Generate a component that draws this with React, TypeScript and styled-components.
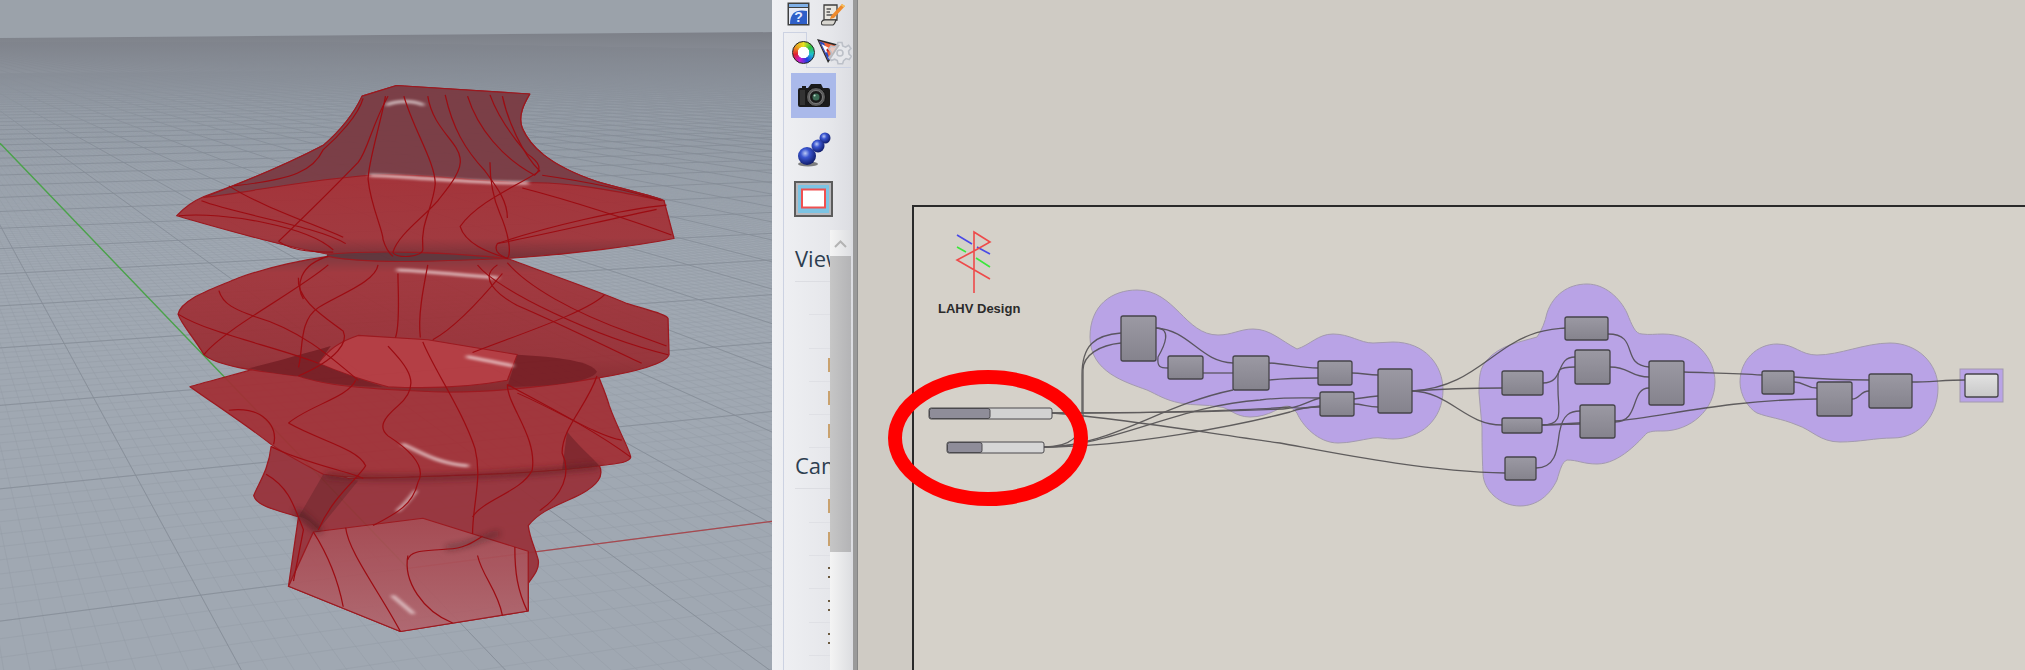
import React, { useMemo } from "react";
import styled, { createGlobalStyle } from "styled-components";

const Global = createGlobalStyle`
  html, body { margin: 0; padding: 0; background: #cfcbc4; overflow: hidden; }
  body { font-family: "Open Sans", "Liberation Sans", sans-serif; }
`;

const Page = styled.div`
  display: flex;
  width: 2025px;
  height: 670px;
  overflow: hidden;
`;

/* ---------- 3d viewport ---------- */
const Viewport = styled.svg`
  flex: none;
  width: 772px;
  height: 670px;
  display: block;
  filter: blur(0.5px);
`;

// perspective grid, two vanishing points on the horizon
const O = [820, 1330];
const VP1 = [9080, 85];
const VP2 = [-206, 85];
const A = 0.0048;
const B = 0.026;
const project = (u: number, v: number) => {
  const w = A * u + B * v + 1;
  const x = (A * u * VP1[0] + B * v * VP2[0] + O[0]) / w;
  const y = (A * u * VP1[1] + B * v * VP2[1] + O[1]) / w;
  return `${x.toFixed(1)} ${y.toFixed(1)}`;
};

const buildGrid = (step: number) => {
  let d = "";
  for (let u = -170; u <= 1500; u += step) {
    const v0 = (0.12 - 1 - A * u) / B;
    d += `M${project(u, v0)}L${project(u, 3000)}`;
  }
  for (let v = -30; v <= 500; v += step) {
    const u0 = (0.12 - 1 - B * v) / A;
    d += `M${project(u0, v)}L${project(6000, v)}`;
  }
  return d;
};

const neck =
  "M728 225 L797 200 L1065 220 C1055 240 1040 270 1050 300 C1065 340 1100 385 1200 425 C1260 445 1320 460 1335 470 L1355 558 C1280 575 1150 595 1020 605 C900 590 760 585 660 595 C560 575 430 530 355 505 C375 480 400 465 410 460 C470 435 560 395 650 340 C680 310 710 270 728 225 Z";
const neckShade =
  "M728 225 L797 200 L1065 220 C1055 240 1040 270 1050 300 C1065 340 1100 385 1200 425 C1260 445 1320 460 1335 470 C1250 450 1150 425 1060 428 C950 425 850 405 745 410 C620 420 500 450 410 462 C470 435 560 395 650 340 C680 310 710 270 728 225 Z";
const tier2 =
  "M358 735 C365 700 420 680 480 650 C540 625 600 610 660 600 C740 620 900 610 1020 605 C1100 640 1200 680 1260 710 C1300 725 1340 735 1343 745 L1345 830 C1340 850 1280 870 1200 885 C1100 905 950 925 840 915 C750 910 660 905 600 880 C530 870 440 860 410 830 C390 790 365 760 358 735 Z";
const tier3 =
  "M382 905 C440 885 600 840 720 785 L860 795 L1040 830 C1120 835 1190 845 1200 870 C1205 890 1215 910 1225 950 C1240 1000 1265 1050 1268 1070 C1265 1085 1230 1085 1205 1090 C1100 1105 1000 1110 850 1115 C770 1120 700 1120 650 1110 C600 1080 570 1060 545 1040 C490 990 430 945 382 905 Z";
const lower =
  "M545 1045 C540 1100 520 1130 510 1160 C515 1185 560 1195 600 1210 L590 1290 L580 1372 L805 1478 L1062 1430 L1062 1365 C1075 1345 1085 1330 1082 1310 C1075 1280 1065 1260 1062 1230 C1090 1190 1130 1180 1170 1155 C1200 1135 1215 1115 1205 1090 C1100 1105 900 1115 700 1120 Z";
const block = "M630 1245 L850 1213 L1062 1290 L1062 1430 L805 1478 L580 1372 Z";

const isoCurves = [
  "M775 225 C765 290 740 380 740 420 C745 480 770 540 770 560 C775 580 780 590 790 600",
  "M812 225 C830 300 875 380 875 430 C870 490 845 520 850 580 C855 605 790 605 790 590 C800 550 850 510 880 470 C900 440 930 400 925 370 C920 330 870 300 860 225",
  "M895 222 C910 300 935 350 975 400 C1000 440 1020 470 1020 510",
  "M940 225 C960 300 1010 370 1075 410 C1090 395 1085 380 1060 360 C1030 320 1000 270 985 222",
  "M1010 225 C1020 280 1050 360 1085 400 C1050 430 960 470 925 530 C935 570 980 590 1020 605 C1030 590 1020 540 1005 500 C990 460 985 420 985 380",
  "M360 505 C450 495 620 530 670 585",
  "M405 470 C470 500 640 530 695 570",
  "M460 435 C520 480 620 520 690 555",
  "M560 565 C600 520 670 440 720 380 C740 350 745 300 780 225",
  "M730 230 C720 270 680 320 650 350 C630 400 590 420 470 435",
  "M560 565 C590 590 640 590 670 590",
  "M1340 480 C1250 490 1100 530 1000 570 C990 590 1010 600 1020 605",
  "M1350 550 C1280 520 1150 470 1050 440",
  "M1320 490 C1200 520 1050 560 1000 570",
  "M1330 470 C1250 440 1150 420 1090 410",
  "M600 650 C595 700 650 740 690 775 C700 800 680 840 600 880",
  "M660 600 C600 620 595 670 610 700",
  "M760 620 C755 660 680 690 640 720 C600 750 610 820 600 860",
  "M800 640 C800 680 805 760 795 790",
  "M860 620 C850 680 840 740 845 790",
  "M440 680 C450 720 490 730 510 740 C600 770 660 830 720 890",
  "M358 735 C420 780 550 810 640 850",
  "M660 620 C600 680 450 770 410 830",
  "M1215 690 C1180 730 1050 780 950 825",
  "M960 620 C1000 680 1200 790 1343 830",
  "M1020 615 C1060 670 1150 730 1270 780 L1340 810",
  "M1000 620 C960 650 1000 690 1040 715 C1150 770 1250 830 1290 850",
  "M1010 640 C960 710 910 770 870 795",
  "M460 960 C530 950 560 1000 550 1040",
  "M580 990 C620 950 700 930 715 890",
  "M580 990 C640 1030 720 1050 735 1090 C720 1120 670 1160 640 1240",
  "M850 800 C870 860 930 960 955 1050 C970 1120 950 1180 950 1250",
  "M780 810 C820 860 850 900 800 950 C770 980 760 1000 780 1020 C820 1050 860 1090 840 1130 C830 1180 800 1200 750 1230",
  "M1020 900 C1020 950 1080 1020 1070 1100 C1050 1150 970 1170 950 1210",
  "M1200 880 C1180 950 1130 1000 1130 1060 C1150 1110 1130 1160 1085 1195",
  "M1020 900 C1100 950 1200 1010 1268 1070",
  "M1040 920 C1120 960 1200 1020 1250 1030",
  "M545 1045 C600 1080 720 1110 730 1120",
  "M535 1110 C580 1140 590 1180 610 1240 L590 1360",
  "M630 1245 C660 1300 680 1360 690 1420",
  "M695 1235 C700 1290 760 1380 805 1478",
  "M820 1300 C810 1360 850 1430 910 1458",
  "M960 1300 C970 1350 1000 1380 1010 1440",
  "M1035 1280 C1035 1340 1040 1380 1060 1430",
  "M820 1310 C825 1285 860 1290 900 1285 C930 1285 950 1270 970 1255",
];

const highlights = [
  "M778 245 C800 235 830 235 850 245",
  "M745 410 C850 415 960 430 1060 428",
  "M800 632 C860 635 940 645 1000 650",
  "M940 835 C970 842 1000 848 1030 856",
  "M810 1040 C850 1060 880 1085 940 1090",
  "M800 1195 C815 1180 825 1165 835 1150",
  "M790 1395 C805 1410 820 1425 830 1435",
];

const Scene = () => {
  const minor = useMemo(() => buildGrid(1), []);
  const major = useMemo(() => buildGrid(10), []);
  return (
    <Viewport viewBox="0 0 1552 1568" preserveAspectRatio="none">
      <defs>
        <linearGradient id="haze" x1="0" y1="0" x2="0" y2="1">
          <stop offset="0" stopColor="#7d8088" />
          <stop offset="0.35" stopColor="#878c95" stopOpacity="0.75" />
          <stop offset="1" stopColor="#a0a8b2" stopOpacity="0" />
        </linearGradient>
        <linearGradient id="flare" x1="0" y1="400" x2="0" y2="610" gradientUnits="userSpaceOnUse">
          <stop offset="0" stopColor="#a52e34" />
          <stop offset="0.75" stopColor="#a2343a" />
          <stop offset="1" stopColor="#6f2a30" />
        </linearGradient>
        <linearGradient id="tierTwo" x1="0" y1="600" x2="0" y2="920" gradientUnits="userSpaceOnUse">
          <stop offset="0" stopColor="#80343a" />
          <stop offset="0.12" stopColor="#a3343a" />
          <stop offset="0.75" stopColor="#983036" />
          <stop offset="1" stopColor="#842428" />
        </linearGradient>
        <linearGradient id="blockFill" x1="0" y1="1213" x2="0" y2="1478" gradientUnits="userSpaceOnUse">
          <stop offset="0" stopColor="#a6464e" />
          <stop offset="1" stopColor="#b0666e" />
        </linearGradient>
        <clipPath id="groundClip">
          <path d="M0 89 L1552 75 L1552 1568 L0 1568 Z" />
        </clipPath>
        <filter id="soft" x="-20%" y="-200%" width="140%" height="500%">
          <feGaussianBlur stdDeviation="4" />
        </filter>
        <filter id="shade" x="-10%" y="-50%" width="120%" height="200%">
          <feGaussianBlur stdDeviation="7" />
        </filter>
      </defs>

      <rect width="1552" height="1568" fill="#9ba2aa" />
      <path d="M0 89 L1552 75 L1552 1568 L0 1568 Z" fill="#a0a8b2" />
      <g clipPath="url(#groundClip)" fill="none">
        <path d={minor} stroke="#959da7" strokeWidth="1.1" />
        <path d={major} stroke="#858c96" strokeWidth="1.7" />
        <rect x="0" y="75" width="1552" height="250" fill="url(#haze)" />
      </g>

      <path d="M0 335 L820 1330" stroke="#4ba34a" strokeWidth="3" fill="none" />
      <path d="M820 1330 L1552 1220" stroke="#a9484e" strokeWidth="3" fill="none" />

      <g stroke="#9c1218" strokeWidth="2.6" strokeLinejoin="round" opacity="0.94">
        <path d={lower} fill="#98323a" />
        <path d={block} fill="url(#blockFill)" />
        <path d={tier3} fill="#a23036" />
        <path d="M660 585 C760 575 900 580 1020 595 L1025 612 C900 625 760 625 655 606 Z" fill="#5e3238" stroke="none" />
        <path d={tier2} fill="url(#tierTwo)" />
        <path d="M720 785 C680 800 660 820 640 850 C680 870 730 890 780 905 C860 910 950 905 1020 890 L1040 830 L860 795 Z" fill="#b6393f" />
        <path d="M1040 830 C1120 835 1190 845 1200 870 C1190 895 1100 905 1020 905 Z" fill="#781a20" stroke="none" />
        <path d="M500 862 C560 845 620 825 665 810 L640 850 C680 870 730 890 770 905 C700 905 640 895 600 880 C560 875 530 870 500 862 Z" fill="#781a20" stroke="none" />
        <path d="M650 1110 L720 1125 L640 1240 C620 1215 610 1210 600 1210 Z" fill="#6f2228" stroke="none" opacity="0.6" />
        <path d="M1140 1010 C1160 1040 1190 1070 1205 1090 L1130 1100 Z" fill="#741c22" stroke="none" opacity="0.7" />
        <path d={neck} fill="url(#flare)" />
        <path d={neckShade} fill="#7a3a42" />
      </g>

      <g filter="url(#shade)" fill="none" strokeLinecap="round" opacity="0.7">
        <path d="M660 1112 C800 1125 1000 1115 1200 1092" stroke="#5e1c22" strokeWidth="12" />
        <path d="M900 1282 C930 1278 970 1262 1000 1248" stroke="#2a1a1c" strokeWidth="7" />
        <path d="M640 1240 C620 1225 615 1215 600 1200" stroke="#4a1c20" strokeWidth="14" />
      </g>

      <g filter="url(#soft)" fill="none" stroke="#fff" strokeWidth="6" strokeLinecap="round" opacity="0.8">
        {highlights.map((d) => (
          <path key={d} d={d} />
        ))}
      </g>

      <g fill="none" stroke="#9c0c12" strokeWidth="2.5">
        {isoCurves.map((d) => (
          <path key={d} d={d} />
        ))}
      </g>
    </Viewport>
  );
};

/* ---------- side panel ---------- */
const Panel = styled.div`
  flex: none;
  width: 81px;
  height: 670px;
  display: flex;
  flex-direction: column;
  background: linear-gradient(90deg, #f0f1f4, #e6e7eb 70%, #dcdde2);
  color: #2f3338;
`;

const TopBar = styled.div`
  flex: none;
  height: 32px;
  padding: 2px 0 0 15px;
  box-sizing: border-box;
  display: flex;
  align-items: flex-start;
  gap: 11px;
`;

const TabRow = styled.div`
  flex: none;
  height: 36px;
  margin-left: 11px;
  margin-right: 2px;
  display: flex;
  position: relative;
  z-index: 1;
`;

const ActiveTab = styled.div`
  flex: none;
  width: 24px;
  box-sizing: border-box;
  border: 1.5px solid #ccd2e2;
  border-bottom: none;
  display: flex;
  align-items: flex-start;
  padding: 8px 0 0 7.5px;
`;

const IdleTabs = styled.div`
  flex: 1;
  box-sizing: border-box;
  border-bottom: 1.5px solid #ccd2e2;
  display: flex;
  align-items: flex-start;
  padding: 6px 0 0 9px;
`;

const ColorWheel = styled.div`
  flex: none;
  width: 23px;
  height: 23px;
  border-radius: 50%;
  border: 1px solid #222;
  box-sizing: border-box;
  background: radial-gradient(circle, #fff 0 5.5px, transparent 6px),
    conic-gradient(#e8e020, #30c040, #20c0d0, #2040e0, #c020d0, #e02030, #e8a020, #e8e020);
`;

const GearSlot = styled.span`
  position: absolute;
  left: 45px;
  top: 9px;
  display: flex;
`;

const TabBody = styled.div`
  flex: 1;
  min-height: 0;
  margin-left: 11px;
  border-left: 1.5px solid #ccd2e2;
  display: flex;
`;

const Content = styled.div`
  flex: none;
  width: 46px;
`;

const PropList = styled.div`
  width: 46px;
  overflow: hidden;
  white-space: nowrap;
  padding-top: 24px;
`;

const ToolIcon = styled.div<{ $on?: boolean; $h: number; $mt?: number }>`
  width: 45px;
  height: ${(p) => p.$h}px;
  margin: ${(p) => p.$mt ?? 0}px 0 0 7px;
  display: flex;
  align-items: center;
  justify-content: center;
  background: ${(p) => (p.$on ? "#aab9ea" : "transparent")};
`;

const Heading = styled.div`
  margin-left: 11px;
  height: 41px;
  width: 80px;
  box-sizing: border-box;
  font-size: 22px;
  line-height: 35px;
  color: #2d3e50;
  border-bottom: 1px solid #dcdde2;
`;

const Row = styled.div`
  height: 33.3px;
  box-sizing: border-box;
  margin-left: 25px;
  border-bottom: 1px solid #dfe0e5;
  display: flex;
  flex-direction: column;
  align-items: flex-end;
  justify-content: center;
  gap: 7px;
`;

const Dash = styled.i`
  display: block;
  width: 2px;
  height: 14px;
  background: #c9a26f;
`;

const Dot = styled.i`
  display: block;
  width: 2px;
  height: 2px;
  background: #6b5a3f;
`;

const ScrollTrack = styled.div`
  flex: none;
  width: 21px;
  margin-top: 162px;
  display: flex;
  flex-direction: column;
  background: linear-gradient(90deg, #f4f4f4, #dedfe2);
`;

const ScrollUp = styled.div`
  flex: none;
  height: 26px;
  display: flex;
  align-items: flex-start;
  justify-content: center;
  padding-top: 10px;
  box-sizing: border-box;
`;

const ScrollThumb = styled.div`
  flex: none;
  height: 296px;
  background: linear-gradient(90deg, #c6c6c6, #b4b4b6);
`;

const Splitter = styled.div`
  flex: none;
  width: 5px;
  height: 670px;
  box-sizing: border-box;
  background: #9a9a9a;
  border-right: 1px solid #858585;
`;

const HelpIcon = () => (
  <svg width="23" height="24" viewBox="0 0 23 24">
    <rect x="0.5" y="0.5" width="22" height="23" fill="#3f4040" />
    <rect x="2" y="2" width="19" height="3" fill="#7fb0e8" />
    <rect x="2" y="6" width="19" height="16" fill="#e6eaf5" />
    <path d="M3 22 C3 10 10 7 20 9 L20 22 Z" fill="#2f5fc8" />
    <text x="11.5" y="19.5" textAnchor="middle" fontSize="14" fontWeight="700" fontFamily="Liberation Sans" fill="#e4ecff">?</text>
  </svg>
);

const ScriptIcon = () => (
  <svg width="24" height="25" viewBox="0 0 24 25">
    <path d="M3 3 H16 V18 H3 Z" fill="#e8e6e0" stroke="#3e3e3e" strokeWidth="1.3" />
    <path d="M0.5 20 C2 17 4 18 5 18 H15 C14 20 14 22 12 23 H2 C0.5 23 0 21 0.5 20 Z" fill="#d8d6d0" stroke="#3e3e3e" strokeWidth="1.2" />
    <path d="M5.5 7 H10 M5.5 10 H9 M5.5 13 H12" stroke="#555" strokeWidth="1.3" />
    <path d="M10 14 L21 2 L24 4 L13 16 L9 17 Z" fill="#ef8a2c" />
    <path d="M21 2 L24 4 L22.8 5.5 L19.8 3.3 Z" fill="#f4c060" />
  </svg>
);

const WedgeIcon = () => (
  <svg width="24" height="26" viewBox="0 0 24 26">
    <path d="M1 1 L24 7 L12 25 Z" fill="#2a2a2a" />
    <path d="M3 3 L21 8 L12 22 Z" fill="#f0653a" />
    <path d="M3 3 L8 5 L14 22 L12 22 Z" fill="#2a4cc0" />
    <path d="M5.5 6 L10 15 L13 10 Z" fill="#fff" />
    <circle cx="12" cy="12" r="1.6" fill="#c02020" />
  </svg>
);

const GearIcon = () => (
  <svg width="24" height="24" viewBox="0 0 24 24" fill="none">
    <path
      d="M10 1.5 H14 L14.7 5 L17.6 6.2 L20.6 4.3 L23 7.4 L20.6 10 L21 13 L23.4 15.2 L21.2 18.6 L18 17.6 L15.6 19.6 L14.6 22.7 H10 L9.3 19.6 L6.6 18.2 L3.4 19.6 L1 16.4 L3.4 13.6 L3 10.8 L0.8 8.2 L3 5 L6.2 6 L8.8 4.4 Z"
      stroke="#bcc0c8"
      strokeWidth="1.6"
      fill="#e7e8ec"
      fillOpacity="0.75"
    />
    <circle cx="12" cy="12" r="3" stroke="#bcc0c8" strokeWidth="1.6" />
  </svg>
);

const CameraIcon = () => (
  <svg width="34" height="28" viewBox="0 0 34 28">
    <path d="M1 8 Q1 6 3 6 H5 V4 H9 V6 H11 L14 2 H24 L26 6 H31 Q33 6 33 8 V23 Q33 25 31 25 H3 Q1 25 1 23 Z" fill="#1b1b1b" />
    <rect x="3" y="8" width="5" height="15" fill="#333" />
    <circle cx="19" cy="15" r="9.5" fill="#5c5c5c" stroke="#111" strokeWidth="1" />
    <circle cx="19" cy="15" r="6.5" fill="#1a1a1a" stroke="#8a8a8a" strokeWidth="0.8" />
    <circle cx="19" cy="15" r="3.5" fill="#3c6b55" />
    <circle cx="17.6" cy="13.6" r="1" fill="#b8d8c8" />
  </svg>
);

const BallsIcon = () => (
  <svg width="36" height="36" viewBox="0 0 36 36">
    <defs>
      <radialGradient id="ball" cx="0.4" cy="0.35" r="0.7">
        <stop offset="0" stopColor="#b9c8f5" />
        <stop offset="0.35" stopColor="#3a55d0" />
        <stop offset="1" stopColor="#0c1660" />
      </radialGradient>
    </defs>
    <ellipse cx="12" cy="32" rx="10" ry="2.5" fill="#333" opacity="0.6" />
    <circle cx="29" cy="6" r="5.5" fill="url(#ball)" />
    <circle cx="22" cy="14" r="6.5" fill="url(#ball)" />
    <circle cx="11" cy="24" r="9" fill="url(#ball)" />
  </svg>
);

const FrameIcon = () => (
  <svg width="39" height="36" viewBox="0 0 39 36">
    <rect x="1" y="1" width="37" height="34" fill="#b8b8bc" stroke="#5c5c5c" strokeWidth="2" />
    <rect x="4" y="4" width="31" height="28" fill="#7cc4e4" />
    <rect x="8" y="8.5" width="23" height="18" fill="#fff" stroke="#f05050" strokeWidth="2" />
  </svg>
);

const Chevron = () => (
  <svg width="13" height="8" viewBox="0 0 13 8">
    <path d="M1 7 L6.5 1.5 L12 7" fill="none" stroke="#b3b3b3" strokeWidth="2" />
  </svg>
);

const SidePanel = () => (
  <Panel>
    <TopBar>
      <HelpIcon />
      <ScriptIcon />
    </TopBar>
    <TabRow>
      <ActiveTab>
        <ColorWheel />
      </ActiveTab>
      <IdleTabs>
        <WedgeIcon />
      </IdleTabs>
      <GearSlot>
        <GearIcon />
      </GearSlot>
    </TabRow>
    <TabBody>
      <Content>
        <ToolIcon $on $h={45} $mt={5}>
          <CameraIcon />
        </ToolIcon>
        <ToolIcon $h={63}>
          <BallsIcon />
        </ToolIcon>
        <ToolIcon $h={36}>
          <FrameIcon />
        </ToolIcon>
        <PropList>
          <Heading>View</Heading>
          <Row />
          <Row />
          <Row><Dash /></Row>
          <Row><Dash /></Row>
          <Row><Dash /></Row>
          <Heading>Camera</Heading>
          <Row><Dash /></Row>
          <Row><Dash /></Row>
          <Row><Dot /><Dot /></Row>
          <Row><Dot /><Dot /></Row>
          <Row><Dot /><Dot /></Row>
        </PropList>
      </Content>
      <ScrollTrack>
        <ScrollUp>
          <Chevron />
        </ScrollUp>
        <ScrollThumb />
      </ScrollTrack>
    </TabBody>
  </Panel>
);

/* ---------- grasshopper canvas ---------- */
const Canvas = styled.div`
  flex: 1;
  position: relative;
  height: 670px;
  box-sizing: border-box;
  padding: 205px 0 0 54px;
  background: #cfcbc4;
  overflow: hidden;
  display: flex;
`;

const Frame = styled.div`
  flex: 1;
  background: #d5d1c9;
  border-top: 2px solid #2a2a2a;
  border-left: 2px solid #2a2a2a;
`;

const Diagram = styled.svg`
  position: absolute;
  left: 0;
  top: 0;
  width: 1167px;
  height: 670px;
  filter: blur(0.35px);
`;

const BrandLabel = styled.div`
  position: absolute;
  left: 80px;
  top: 302px;
  font: 700 13px/14px "Liberation Sans", Arial, sans-serif;
  color: #2b2b2b;
  white-space: nowrap;
`;

const blobs = [
  "M1090 337 C1090 305 1112 290 1137 290 C1175 290 1185 335 1218 335 C1232 335 1240 329 1253 329 C1270 329 1280 340 1297 349 C1310 345 1318 334 1333 334 C1350 334 1360 343 1373 343 L1393 342 C1425 342 1443 365 1443 390 C1443 420 1420 439 1393 439 C1385 439 1380 437 1373 438 C1360 440 1350 443 1338 443 C1318 443 1302 425 1297 413 C1293 409 1290 406 1287 406 C1280 406 1270 417 1250 417 C1235 417 1228 407 1220 407 C1205 404 1195 406 1180 403 C1165 400 1158 395 1147 390 C1125 382 1090 372 1090 337 Z",
  "M1479 393 C1479 375 1480 368 1487 360 C1500 345 1520 342 1537 337 C1542 330 1545 322 1547 313 C1553 295 1568 284 1587 284 C1605 284 1620 298 1627 313 C1632 325 1635 334 1642 334 C1650 335 1655 334 1663 334 C1695 334 1715 358 1715 382 C1715 410 1690 431 1663 431 C1655 431 1652 431 1647 433 C1640 440 1620 464 1597 464 C1583 464 1578 460 1567 460 C1562 462 1560 470 1557 480 C1550 495 1537 506 1520 506 C1500 506 1483 490 1483 473 C1482 455 1482 440 1482 427 Z",
  "M1740 382 C1740 360 1757 344 1777 344 C1795 344 1800 355 1817 355 C1840 355 1865 343 1890 343 C1917 343 1938 363 1938 388 C1938 415 1920 438 1893 438 C1875 438 1860 442 1840 442 C1820 442 1812 430 1797 425 C1780 418 1770 418 1757 413 C1748 408 1740 395 1740 382 Z",
];

const nodes: [number, number, number, number][] = [
  [1121, 316, 35, 45],
  [1168, 356, 35, 23],
  [1233, 356, 36, 34],
  [1318, 361, 34, 24],
  [1320, 392, 34, 24],
  [1378, 369, 34, 44],
  [1565, 317, 43, 23],
  [1575, 350, 35, 34],
  [1502, 371, 41, 24],
  [1502, 418, 40, 15],
  [1580, 405, 35, 33],
  [1505, 457, 31, 23],
  [1649, 361, 35, 44],
  [1762, 371, 32, 23],
  [1817, 382, 35, 34],
  [1869, 374, 43, 34],
];

const wires = [
  "M1052 413 L1082 413 L1082 375 C1082 345 1095 335 1121 333",
  "M1044 447 C1065 447 1083 440 1083 415 L1083 370 C1083 355 1100 345 1121 343",
  "M1052 413 C1120 413 1220 412 1283 409 C1300 408 1305 402 1320 398",
  "M1052 413 C1120 418 1200 432 1280 443 C1330 452 1420 471 1505 473",
  "M1082 413 C1160 413 1250 410 1290 407 C1300 410 1310 407 1320 406",
  "M1044 447 C1110 447 1160 405 1233 390",
  "M1044 447 C1110 447 1180 405 1260 400 C1285 397 1300 398 1320 398",
  "M1044 447 C1130 447 1240 425 1290 412 C1300 408 1310 407 1320 407",
  "M1156 328 C1172 328 1165 345 1158 357 C1157 367 1160 368 1168 368",
  "M1156 328 C1190 330 1200 362 1233 363",
  "M1203 373 L1233 373",
  "M1269 363 C1290 364 1300 368 1318 368",
  "M1269 380 C1290 378 1300 378 1318 378",
  "M1352 373 C1362 373 1368 375 1378 375",
  "M1354 399 C1362 398 1368 397 1378 396",
  "M1354 404 C1362 404 1368 407 1378 407",
  "M1412 391 C1470 388 1490 350 1530 335 C1545 329 1555 329 1565 328",
  "M1412 391 C1440 389 1470 388 1502 388",
  "M1412 391 C1450 392 1465 425 1502 425",
  "M1543 383 C1565 383 1555 357 1575 357",
  "M1542 425 C1565 425 1558 410 1558 390 C1558 370 1555 367 1575 367",
  "M1542 425 C1560 425 1570 424 1580 424",
  "M1536 468 C1560 468 1557 440 1560 430 C1563 415 1570 411 1580 411",
  "M1542 425 L1615 421 C1660 418 1720 400 1817 399",
  "M1608 334 C1640 334 1620 365 1649 367",
  "M1610 367 C1630 367 1630 377 1649 377",
  "M1615 422 C1640 422 1630 388 1649 388",
  "M1684 372 C1710 373 1735 373 1762 375",
  "M1794 377 C1820 379 1845 380 1869 380",
  "M1794 382 C1805 382 1805 388 1817 388",
  "M1852 399 C1860 399 1860 391 1869 391",
  "M1912 382 C1930 382 1945 380 1965 380",
];

const GrassDiagram = () => (
  <Diagram viewBox="858 0 1167 670">
    <defs>
      <linearGradient id="nodeFill" x1="0" y1="0" x2="0" y2="1">
        <stop offset="0" stopColor="#9b99a3" />
        <stop offset="1" stopColor="#85838d" />
      </linearGradient>
      <linearGradient id="panelFill" x1="0" y1="0" x2="0" y2="1">
        <stop offset="0" stopColor="#e2e2e2" />
        <stop offset="1" stopColor="#c8c8c8" />
      </linearGradient>
    </defs>

    {/* logo */}
    <g fill="none" strokeWidth="1.6">
      <path d="M957 235 L972 244 M977 247 L990 254" stroke="#4a4ae6" />
      <path d="M957 247 L966 252 M976 258 L990 267" stroke="#3ce63c" />
      <path d="M974 293 L974 232 L990 242 L974 251 L957 260 L990 279" stroke="#ee4a4a" />
    </g>

    {blobs.map((d) => (
      <path key={d} d={d} fill="#b9a3e6" stroke="#a39aae" strokeWidth="1" />
    ))}
    <rect x="1960" y="369" width="43" height="33" fill="#b9a3e6" stroke="#a39aae" strokeWidth="1" />

    <g fill="none" stroke="#4a484a" strokeWidth="1.3" opacity="0.85">
      {wires.map((d) => (
        <path key={d} d={d} />
      ))}
    </g>

    {nodes.map(([x, y, w, h]) => (
      <rect key={`${x}-${y}`} x={x} y={y} width={w} height={h} rx="2" fill="url(#nodeFill)" stroke="#454449" strokeWidth="1.3" />
    ))}
    <rect x="1965" y="374" width="33" height="23" rx="2" fill="url(#panelFill)" stroke="#454449" strokeWidth="1.3" />

    {/* number sliders */}
    <rect x="929" y="408" width="123" height="11" rx="2" fill="#d2d2d2" stroke="#4a494d" strokeWidth="1" />
    <rect x="929.5" y="408.5" width="60.5" height="10" rx="2" fill="#8f8d99" stroke="#4a494d" strokeWidth="1" />
    <rect x="947" y="442" width="97" height="11" rx="2" fill="#d6d6d6" stroke="#4a494d" strokeWidth="1" />
    <rect x="947.5" y="442.5" width="34.5" height="10" rx="2" fill="#8f8d99" stroke="#4a494d" strokeWidth="1" />

    <ellipse cx="988" cy="438" rx="93" ry="61" fill="none" stroke="#ff0000" strokeWidth="14" />
  </Diagram>
);

export default function App() {
  return (
    <>
      <Global />
      <Page>
        <Scene />
        <SidePanel />
        <Splitter />
        <Canvas>
          <Frame />
          <GrassDiagram />
          <BrandLabel>LAHV Design</BrandLabel>
        </Canvas>
      </Page>
    </>
  );
}
